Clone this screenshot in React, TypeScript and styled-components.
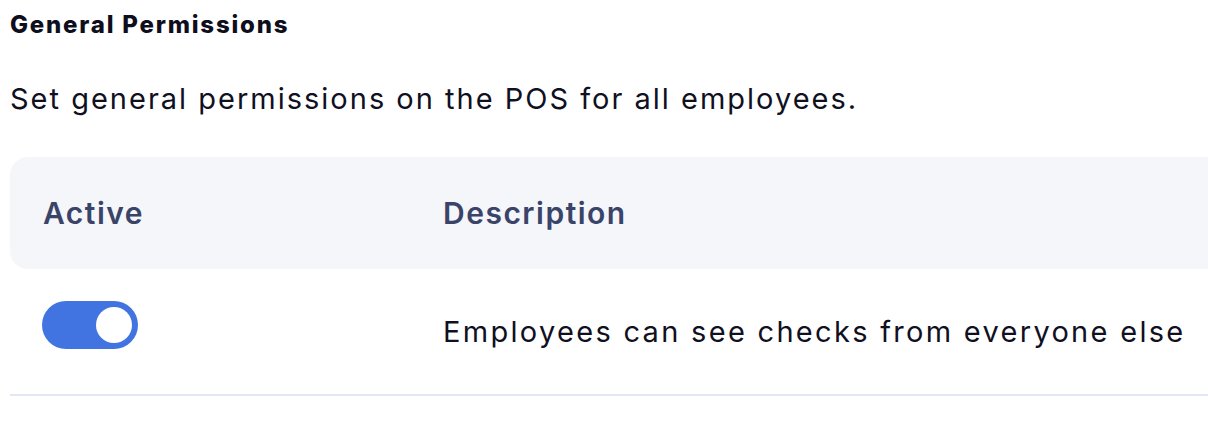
import React, { useState } from 'react'
import styled, { createGlobalStyle } from 'styled-components'

const GlobalStyle = createGlobalStyle`
  html, body {
    margin: 0;
    padding: 0;
    background: #ffffff;
  }
  body {
    font-family: 'Inter', 'Open Sans', sans-serif;
    color: #101020;
  }
`

const Page = styled.section`
  padding: 10px 0 0 10px;
  width: 1198px;
  overflow: hidden;
`

const Heading = styled.h2`
  margin: 0;
  font-size: 24px;
  line-height: 30px;
  font-weight: 800;
  letter-spacing: 1.8px;
  color: #0e0e1c;
`

const Lead = styled.p`
  margin: 41px 0 0;
  font-size: 29px;
  line-height: 36px;
  font-weight: 400;
  letter-spacing: 2px;
  color: #10101f;
`

const Table = styled.div`
  margin-top: 40px;
  width: 1240px;
`

const Row = styled.div<{ $head?: boolean }>`
  display: grid;
  grid-template-columns: 400px 1fr;
  align-items: center;
  padding-left: 33px;
  height: ${p => (p.$head ? '112px' : '125px')};
  background: ${p => (p.$head ? '#f5f6fa' : 'transparent')};
  border-radius: ${p => (p.$head ? '18px 0 0 18px' : '0')};
  border-bottom: ${p => (p.$head ? 'none' : '2px solid #e3e7f1')};
`

const HeadCell = styled.div`
  font-size: 30px;
  font-weight: 600;
  letter-spacing: 1.5px;
  color: #3a4469;
`

const Cell = styled.div`
  font-size: 29px;
  letter-spacing: 2.3px;
  color: #10101f;
`

const ToggleCell = styled.div`
  align-self: start;
  padding-top: 32px;
  margin-left: -1px;
`

const SwitchTrack = styled.button<{ $on: boolean }>`
  position: relative;
  display: block;
  width: 96px;
  height: 48px;
  border: none;
  border-radius: 24px;
  padding: 0;
  cursor: pointer;
  background: ${p => (p.$on ? '#4174e0' : '#cfd5e3')};
`

const Knob = styled.span<{ $on: boolean }>`
  position: absolute;
  top: 6px;
  left: ${p => (p.$on ? '54px' : '6px')};
  width: 36px;
  height: 36px;
  border-radius: 50%;
  background: #ffffff;
  transition: left 0.2s ease;
`

const Toggle = () => {
  const [on, setOn] = useState(true)
  return (
    <SwitchTrack $on={on} onClick={() => setOn(!on)} aria-pressed={on}>
      <Knob $on={on} />
    </SwitchTrack>
  )
}

export default function App() {
  return (
    <Page>
      <GlobalStyle />
      <Heading>General Permissions</Heading>
      <Lead>Set general permissions on the POS for all employees.</Lead>
      <Table>
        <Row $head>
          <HeadCell>Active</HeadCell>
          <HeadCell>Description</HeadCell>
        </Row>
        <Row>
          <ToggleCell>
            <Toggle />
          </ToggleCell>
          <Cell>Employees can see checks from everyone else</Cell>
        </Row>
      </Table>
    </Page>
  )
}
